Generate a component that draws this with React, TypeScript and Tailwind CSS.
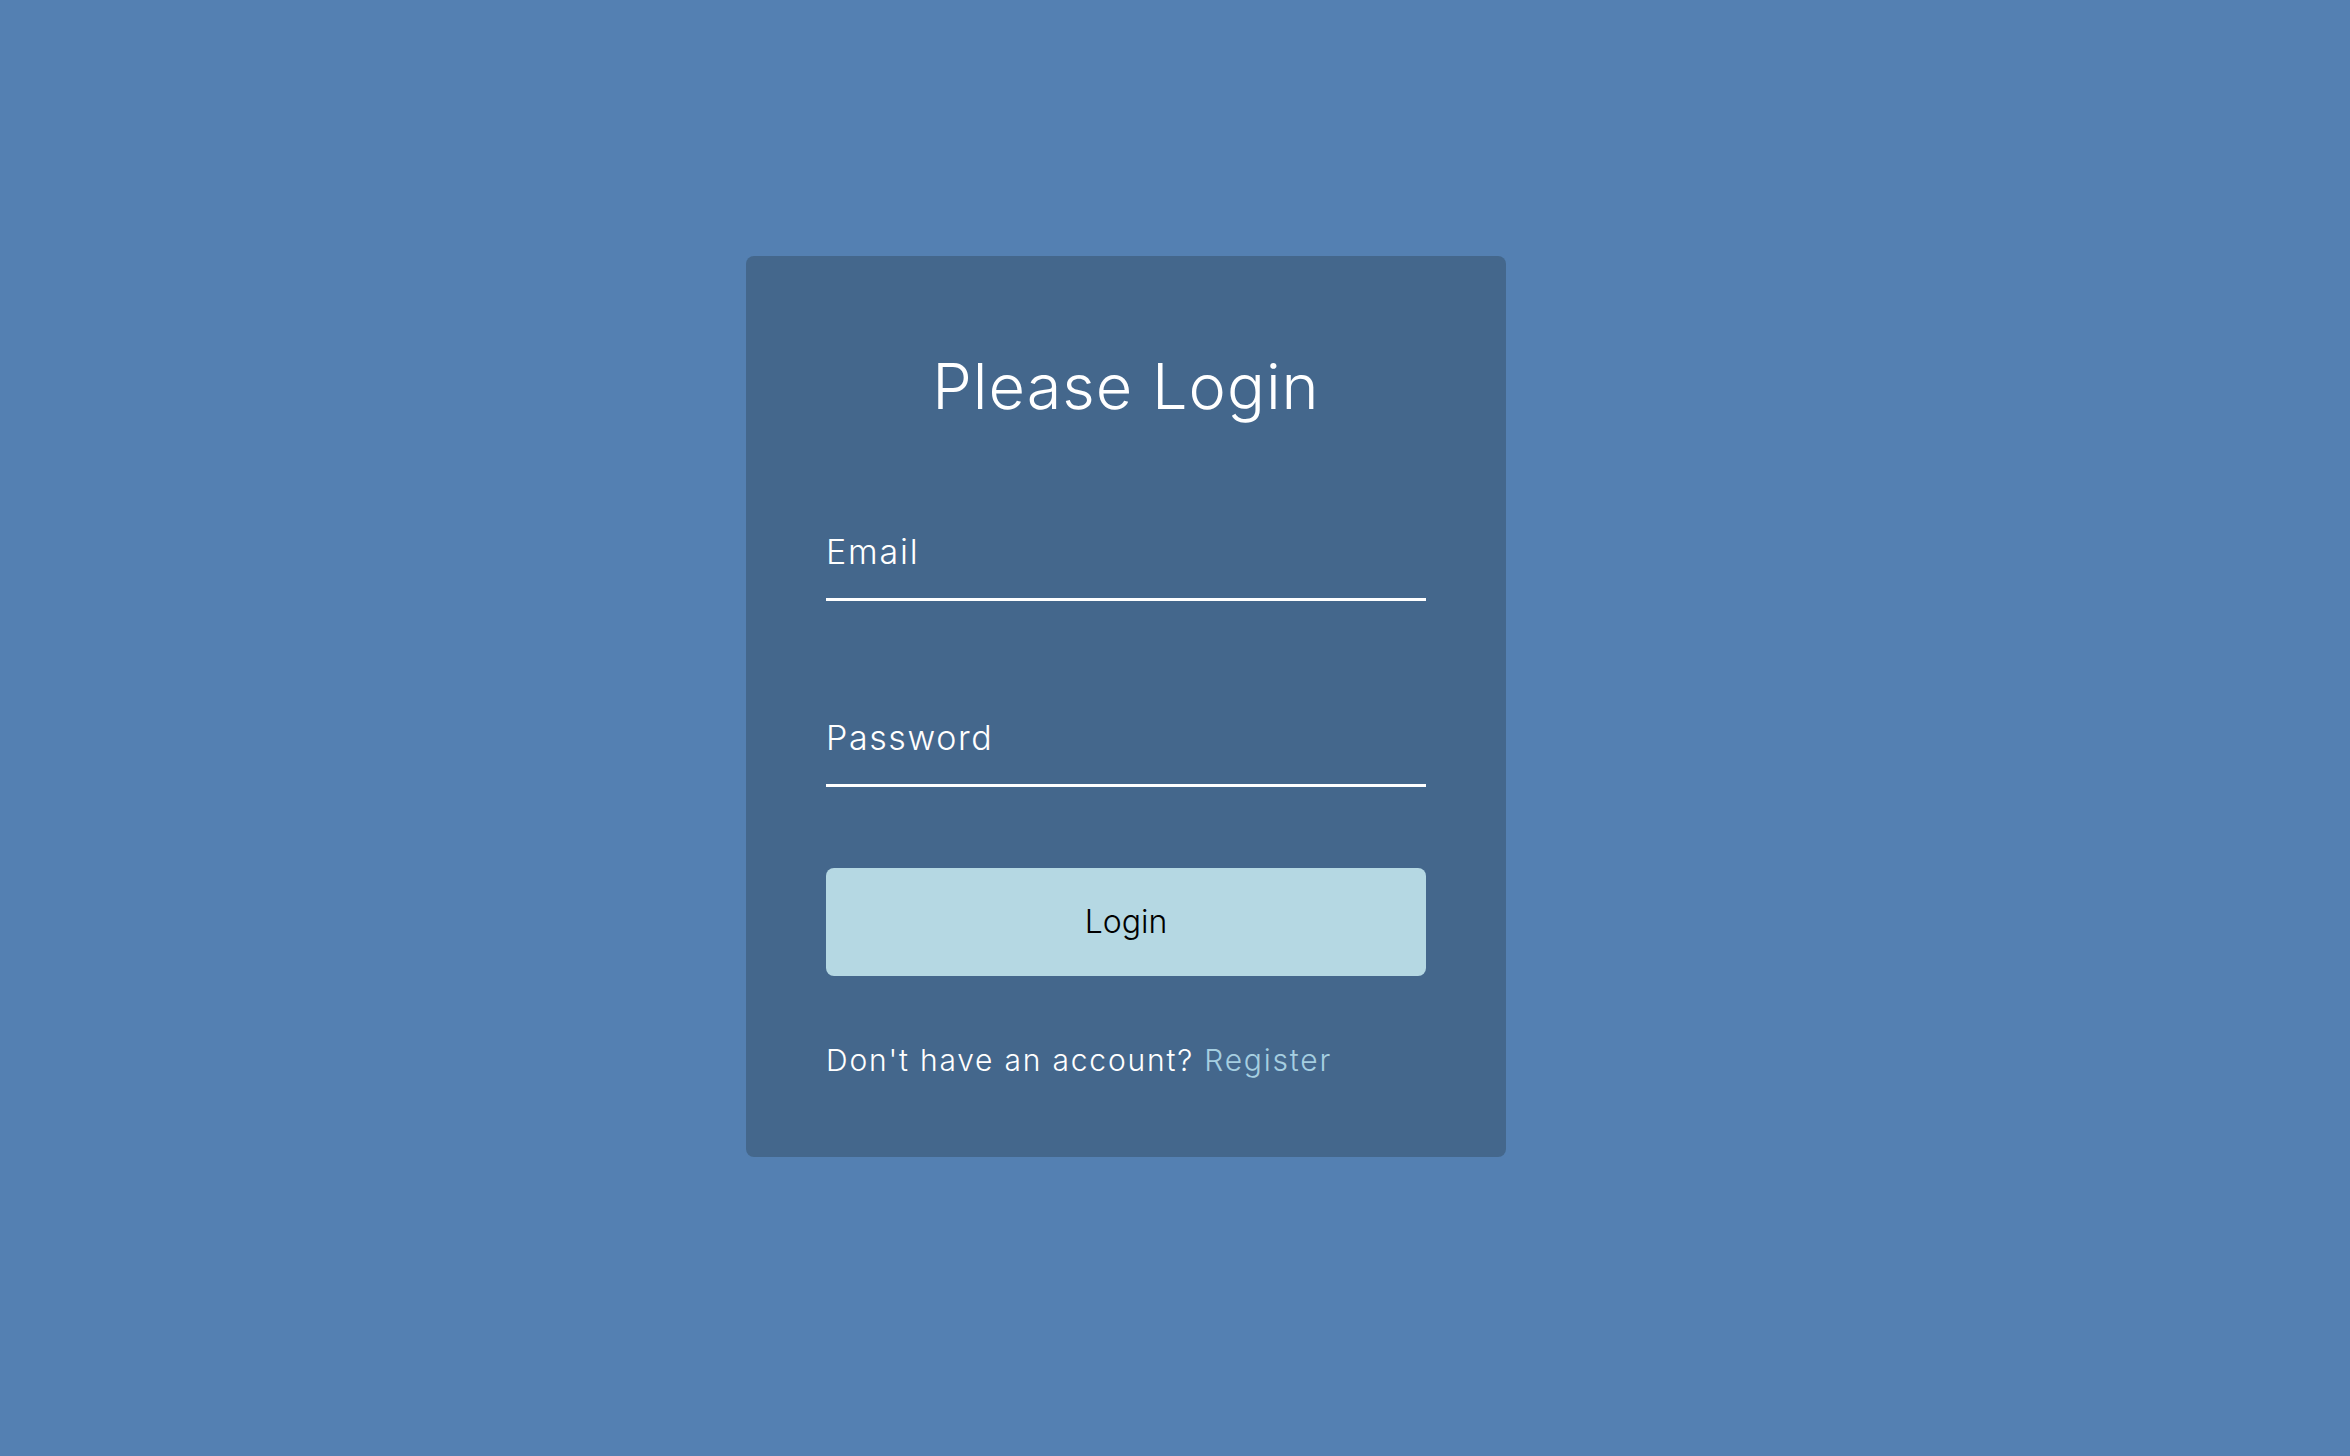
export default function App() {
  return (
    <div className="min-h-screen w-full bg-[#5480b2] flex pl-[746px] pt-[256px] font-['Inter','Noto_Sans',sans-serif] font-light">
      <div className="w-[760px] h-[901px] bg-[#44678c] rounded-[8px] px-[80px] pt-[99px] pb-[82px] flex flex-col">
        <h1 className="text-[63px] leading-none tracking-[1px] text-white text-center font-light">Please Login</h1>

        <div className="mt-[116px] pb-[28px] border-b-[3px] border-white">
          <input
            type="email"
            placeholder="Email"
            className="w-full bg-transparent outline-none text-[34px] leading-none h-[34px] tracking-[1.8px] text-white placeholder:text-white font-light"
          />
        </div>

        <div className="mt-[120px] pb-[28px] border-b-[3px] border-white">
          <input
            type="password"
            placeholder="Password"
            className="w-full bg-transparent outline-none text-[34px] leading-none h-[34px] tracking-[1.6px] text-white placeholder:text-white font-light"
          />
        </div>

        <button className="mt-[81px] h-[110px] w-full rounded-[8px] bg-[#b5d8e3] text-black text-[32px] leading-none font-light">
          Login
        </button>

        <p className="mt-[69px] text-[30px] leading-none tracking-[1.8px] text-white">
          Don't have an account? <a href="#" className="text-[#a6cfe1]">Register</a>
        </p>
      </div>
    </div>
  );
}
